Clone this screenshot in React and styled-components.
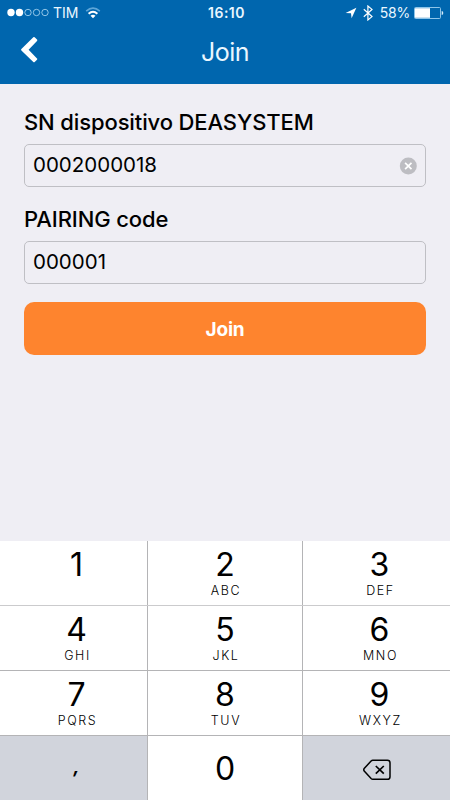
import React, { useState } from 'react';
import styled, { createGlobalStyle } from 'styled-components';

const keyRows = [
  [
    { digit: '1', side: true },
    { digit: '2', letters: 'ABC' },
    { digit: '3', letters: 'DEF', side: true },
  ],
  [
    { digit: '4', letters: 'GHI', side: true },
    { digit: '5', letters: 'JKL' },
    { digit: '6', letters: 'MNO', side: true },
  ],
  [
    { digit: '7', letters: 'PQRS', side: true },
    { digit: '8', letters: 'TUV' },
    { digit: '9', letters: 'WXYZ', side: true },
  ],
];

const Signal = () => (
  <svg width='42' height='9' viewBox='0 0 42 9'>
    {[0, 1, 2, 3, 4].map((i) => (
      <circle
        key={i}
        cx={4 + i * 8.5}
        cy='4.5'
        r={i < 2 ? 3.7 : 3.2}
        fill={i < 2 ? '#fff' : 'none'}
        stroke={i < 2 ? 'none' : '#b5dcf5'}
        strokeWidth='0.8'
      />
    ))}
  </svg>
);

const Wifi = () => (
  <svg width='16' height='12' viewBox='0 0 16 12' fill='none'>
    <path d='M1.2 4.2Q8-2 14.8 4.2' stroke='#5ea6d8' strokeWidth='1.6' />
    <path d='M3.6 6.7Q8 2.7 12.4 6.7' stroke='#fff' strokeWidth='1.9' />
    <path d='M5.5 8.7Q8 6.6 10.5 8.7L8 11.3Z' fill='#fff' />
  </svg>
);

const Location = () => (
  <svg width='12' height='12' viewBox='0 0 12 12'>
    <path d='M11.4.8 6.6 11.2 6 6.3.6 5.9Z' fill='#fff' />
  </svg>
);

const Bluetooth = () => (
  <svg width='10' height='16' viewBox='0 0 10 16' fill='none'>
    <path d='M.8 4.3 9 11.6 4.9 15V1L9 4.4.8 11.7' stroke='#fff' strokeWidth='1.2' />
  </svg>
);

const Battery = () => (
  <svg width='30' height='12' viewBox='0 0 30 12'>
    <rect x='.5' y='.5' width='26' height='11' rx='1' fill='none' stroke='#9ed0ef' strokeWidth='.9' />
    <rect x='1' y='1.2' width='15' height='9.6' fill='#fff' />
    <path d='M27.7 4Q29.3 4 29.3 6T27.7 8Z' fill='#d5ebf8' />
  </svg>
);

const BackArrow = () => (
  <svg width='18' height='28' viewBox='0 0 18 28'>
    <path
      d='M12.3 1.2Q13 .7 13.7 1.3L16 3.6Q16.6 4.3 16 5L7.6 13.7 16 22.4Q16.6 23.1 16 23.8L13.7 26Q13 26.6 12.3 26L.4 14.4Q-.2 13.7.4 13Z'
      fill='#fff'
    />
  </svg>
);

const ClearIcon = () => (
  <svg width='18' height='18' viewBox='0 0 18 18'>
    <circle cx='9.3' cy='9' r='8.5' fill='#bdbdc2' />
    <path d='m6.1 5.8 6.4 6.4m0-6.4-6.4 6.4' stroke='#fff' strokeWidth='1.7' />
  </svg>
);

const DeleteIcon = () => (
  <svg width='28' height='22' viewBox='0 0 28 22' fill='none' stroke='#000' strokeWidth='1.5'>
    <path d='M9.7 1.2H24.4Q27 1.2 27 3.8V17.7Q27 20.3 24.4 20.3H9.7Q8.9 20.3 8.1 19.5L1.2 12.1Q.3 10.8 1.2 9.5L8.1 2Q8.9 1.2 9.7 1.2Z' />
    <path d='m12.8 7 8 7.7m0-7.7-8 7.7' strokeWidth='1.7' />
  </svg>
);

const Field = ({ label, value, onChange, clearable }) => (
  <FieldLabel>
    <LabelText>{label}</LabelText>
    <InputBox>
      <Input value={value} inputMode='numeric' onChange={(e) => onChange(e.target.value)} />
      {clearable && value ? (
        <IconButton type='button' aria-label='clear' onClick={() => onChange('')}>
          <ClearIcon />
        </IconButton>
      ) : null}
    </InputBox>
  </FieldLabel>
);

const App = () => {
  const [serial, setSerial] = useState('0002000018');
  const [code, setCode] = useState('000001');

  const press = (digit) => setSerial(serial + digit);

  return (
    <Screen>
      <GlobalStyle />
      <Header>
        <StatusBar>
          <StatusGroup>
            <Signal />
            <Carrier>TIM</Carrier>
            <Wifi />
          </StatusGroup>
          <Clock>16:10</Clock>
          <StatusGroup $end>
            <StatusIcons>
              <Location />
              <Bluetooth />
            </StatusIcons>
            <Percent>58%</Percent>
            <Battery />
          </StatusGroup>
        </StatusBar>
        <NavBar>
          <BackButton aria-label='back'>
            <BackArrow />
          </BackButton>
          <Title>Join</Title>
        </NavBar>
      </Header>

      <Form onSubmit={(e) => e.preventDefault()}>
        <Field label='SN dispositivo DEASYSTEM' value={serial} onChange={setSerial} clearable />
        <Field label='PAIRING code' value={code} onChange={setCode} />
        <JoinButton>Join</JoinButton>
      </Form>

      <Keypad>
        {keyRows.map((row, i) => (
          <KeyRow key={i} $soft={i === 0}>
            {row.map(({ digit, letters, side }) => (
              <Key key={digit} $side={side} onClick={() => press(digit)}>
                <Digit>{digit}</Digit>
                <Letters>{letters}</Letters>
              </Key>
            ))}
          </KeyRow>
        ))}
        <KeyRow>
          <FunctionKey $side onClick={() => press(',')}>
            <Comma>,</Comma>
          </FunctionKey>
          <ZeroKey onClick={() => press('0')}>
            <Digit>0</Digit>
          </ZeroKey>
          <FunctionKey aria-label='delete' onClick={() => setSerial(serial.slice(0, -1))}>
            <DeleteIcon />
          </FunctionKey>
        </KeyRow>
      </Keypad>
    </Screen>
  );
};

export default App;

const GlobalStyle = createGlobalStyle`
  * {
    box-sizing: border-box;
  }
  body {
    margin: 0;
    font-family: Inter, 'Liberation Sans', sans-serif;
  }
  button,
  input {
    font-family: inherit;
  }
  svg {
    display: block;
    flex-shrink: 0;
  }
`;

const Screen = styled.div`
  width: 450px;
  height: 800px;
  display: flex;
  flex-direction: column;
  background: #efeef4;
  color: #000;
  overflow: hidden;
`;

const Header = styled.header`
  height: 84px;
  background: #0066ae;
  color: #eaf7ff;
`;

const StatusBar = styled.div`
  height: 25px;
  padding: 0 6px 0 7px;
  display: grid;
  grid-template-columns: 1fr auto 1fr;
  align-items: center;
`;

const StatusGroup = styled.div`
  display: flex;
  align-items: center;
  justify-content: ${({ $end }) => ($end ? 'flex-end' : 'flex-start')};
`;

const StatusIcons = styled.div`
  display: flex;
  align-items: center;
  gap: 6px;
`;

const Carrier = styled.span`
  font-size: 14px;
  line-height: 25px;
  margin: 0 7px 0 4px;
`;

const Clock = styled.span`
  font-size: 14px;
  font-weight: 600;
  letter-spacing: 0.5px;
  padding-left: 2px;
`;

const Percent = styled.span`
  font-size: 14px;
  letter-spacing: -0.2px;
  line-height: 25px;
  margin: 0 4px 0 7px;
`;

const NavBar = styled.div`
  height: 54px;
  display: grid;
  grid-template-columns: 60px 1fr 60px;
  align-items: center;
`;

const IconButton = styled.button`
  border: 0;
  padding: 0;
  background: none;
  display: flex;
  justify-content: center;
`;

const BackButton = styled(IconButton)`
  padding-bottom: 4px;
`;

const Title = styled.h1`
  margin: 0;
  text-align: center;
  font-size: 25px;
  font-weight: 400;
  letter-spacing: -0.5px;
  line-height: 30px;
`;

const Form = styled.form`
  flex: 1;
  padding: 22px 24px 0;
`;

const FieldLabel = styled.label`
  display: block;
  margin-bottom: 16px;
`;

const LabelText = styled.div`
  height: 38px;
  line-height: 32px;
  font-size: 22px;
  font-weight: 500;
  letter-spacing: -0.12px;
`;

const InputBox = styled.div`
  height: 43px;
  padding: 0 8px;
  display: flex;
  align-items: center;
  border: 1px solid #bfbfc4;
  border-radius: 5px;
`;

const Input = styled.input`
  flex: 1;
  min-width: 0;
  height: 38px;
  padding: 0 0 2px;
  border: 0;
  outline: 0;
  background: none;
  color: #000;
  font-size: 20.5px;
`;

const JoinButton = styled.button`
  width: 100%;
  height: 53px;
  margin-top: 2px;
  padding: 1px 0 0;
  border: 0;
  border-radius: 10px;
  background: #fe842e;
  color: #fff;
  font-size: 19px;
  font-weight: 700;
  letter-spacing: -0.2px;
`;

const Keypad = styled.div`
  height: 259px;
  display: flex;
  flex-direction: column;
`;

const KeyRow = styled.div`
  height: 65px;
  flex-shrink: 0;
  display: grid;
  grid-template-columns: 147px 154px 147px;
  column-gap: 1px;
  background: #b4b4b6;
  border-bottom: ${({ $soft }) => ($soft ? '1px solid #cbcbcd' : '1px solid #b4b4b6')};
`;

/* the outer columns sit slightly right of their centre */
const Key = styled.button`
  border: 0;
  padding: 6px 0 0 ${({ $side }) => ($side ? '6px' : '0')};
  display: flex;
  flex-direction: column;
  align-items: center;
  background: #fff;
  color: #000;
`;

const ZeroKey = styled(Key)`
  padding-top: 1px;
  justify-content: center;
`;

const FunctionKey = styled(Key)`
  padding-top: 3px;
  justify-content: center;
  background: #d1d4dc;
`;

const Digit = styled.span`
  font-size: 32px;
  font-weight: 400;
  line-height: 36px;
`;

const Letters = styled.span`
  font-size: 12.5px;
  font-weight: 350;
  line-height: 15px;
  letter-spacing: 1.6px;
  padding-left: 2px;
`;

const Comma = styled.span`
  font-size: 18px;
  font-style: italic;
  font-weight: 700;
  line-height: 24px;
  padding-bottom: 6px;
`;
